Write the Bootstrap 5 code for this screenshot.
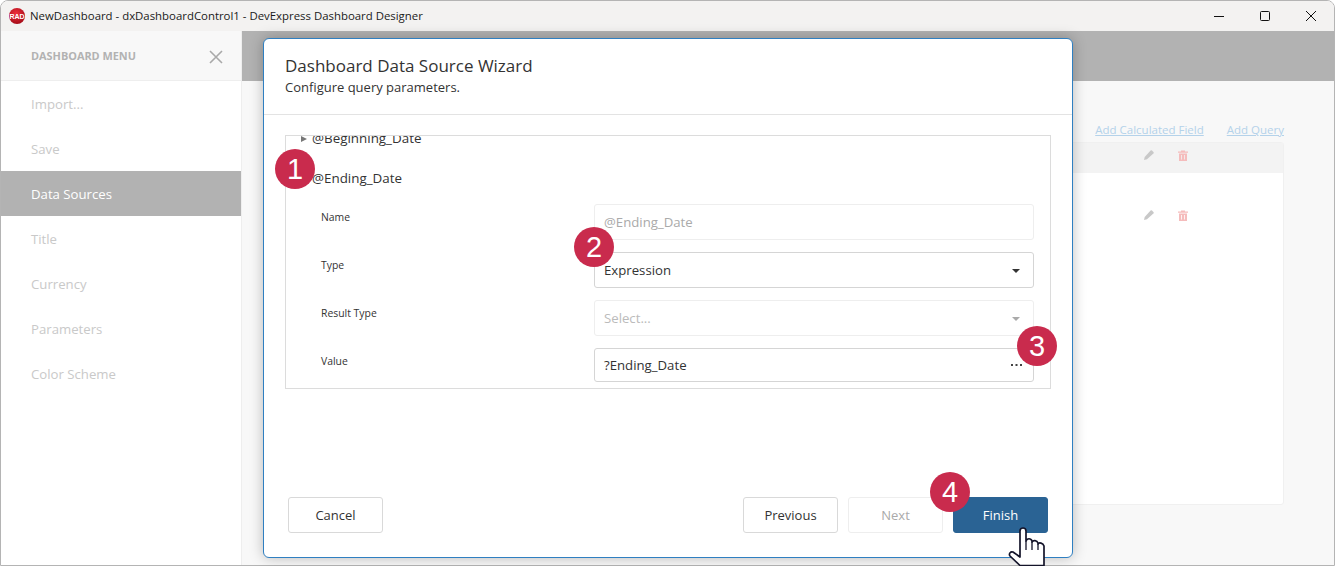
<!DOCTYPE html>
<html lang="en">
<head>
    <meta charset="UTF-8">
    <meta name="viewport" content="width=device-width, initial-scale=1.0">
    <link href="https://cdn.jsdelivr.net/npm/bootstrap@5.3.3/dist/css/bootstrap.min.css" rel="stylesheet">
    <title>DevExpress Dashboard Designer</title>
    <style>
        html, body {
            height: 566px;
            overflow: hidden;
            background-color: #fff;
        }
        body {
            font-family: "Open Sans", "Noto Sans", sans-serif;
            font-size: 13px;
            color: #333;
        }
        .app-window {
            position: relative;
            height: 566px;
            border: 1px solid #b4b4b4;
            border-radius: 8px 8px 0 0;
            overflow: hidden;
        }
        .title-bar {
            height: 30px;
            flex: none;
            background-color: #f3f2f1;
            padding-left: 8px;
            color: #1a1a1a;
            font-size: 11.4px;
        }
        .app-logo {
            width: 16px;
            height: 16px;
            margin-right: 5px;
        }
        .win-btn {
            width: 46px;
            height: 30px;
        }
        .side-panel {
            width: 240px;
            flex: none;
            background-color: #fff;
        }
        .side-head {
            height: 50px;
            background-color: #f8f8f8;
            border-bottom: 1px solid #eee;
            padding: 2px 17px 0 30px;
            color: #b2b2b2;
            font-size: 10.9px;
            font-weight: 700;
        }
        .side-link {
            height: 45px;
            padding: 2px 0 0 30px;
            color: #c9c9c9;
            font-size: 13.2px;
        }
        .side-link.picked {
            background-color: #b2b2b2;
            color: #fff;
        }
        .work-area {
            background-color: #f8f8f8;
            border-left: 1px solid #eee;
        }
        .work-top {
            height: 50px;
            background-color: #b2b2b2;
        }
        .work-links {
            padding: 40px 50px 0 0;
            gap: 23px;
            font-size: 11.5px;
            height: 61px;
        }
        .work-links a {
            color: #b4d2ea;
        }
        .work-card {
            height: 363px;
            margin: 0 50px 0 60px;
            background-color: #fff;
            border: 1px solid #f0f0f0;
            border-radius: 3px;
        }
        .work-row {
            height: 30px;
            gap: 24px;
            padding: 7px 95px 0 0;
        }
        .work-row.shaded {
            background-color: #f3f3f3;
            margin-bottom: 30px;
        }
        .wizard {
            position: absolute;
            left: 263px;
            top: 38px;
            width: 810px;
            height: 520px;
            background-color: #fff;
            border: 1px solid #2f7fc1;
            border-radius: 6px;
            box-shadow: 0 0 14px rgba(0, 0, 0, .25);
        }
        .wizard-head {
            height: 76px;
            padding: 14px 21px 0;
            border-bottom: 1px solid #e3e3e3;
            color: #333;
        }
        .wizard-title {
            font-size: 17px;
            line-height: 25px;
        }
        .wizard-sub {
            font-size: 13px;
            line-height: 18px;
        }
        .param-box {
            margin: 20px 21px 0;
            height: 254px;
            border: 1px solid #dcdcdc;
            overflow: hidden;
        }
        .param-line {
            font-size: 13.4px;
            line-height: 18px;
        }
        .param-line.cut {
            margin-top: -7px;
            padding-left: 15px;
            height: 18px;
        }
        .param-line.open {
            margin-top: 22px;
            padding-left: 26px;
            height: 35px;
        }
        .caret-right {
            display: inline-block;
            border-left: 6px solid #777;
            border-top: 3.5px solid transparent;
            border-bottom: 3.5px solid transparent;
            margin-right: 5px;
            vertical-align: 1px;
        }
        .param-row {
            height: 48px;
            padding-left: 35px;
            padding-right: 16px;
        }
        .param-name {
            width: 273px;
            flex: none;
            font-size: 10.4px;
            padding-top: 6px;
        }
        .param-field {
            height: 36px;
            flex: 1;
            padding: 2px 9px 0;
            border: 1px solid #d5d5d5;
            border-radius: 3px;
            font-size: 13.2px;
            color: #333;
        }
        .param-field.off {
            border-color: #eee;
            color: #bbb;
        }
        .param-field.locked {
            color: #aaa;
        }
        .param-row.last .param-field {
            height: 34px;
        }
        .caret-down {
            margin-right: 4px;
            border-top: 4px solid #333;
            border-left: 4px solid transparent;
            border-right: 4px solid transparent;
        }
        .off .caret-down {
            border-top-color: #aaa;
        }
        .more-dots {
            margin: -2px 2px 0 0;
        }
        .wizard-foot {
            position: absolute;
            left: 24px;
            right: 24px;
            bottom: 24px;
            gap: 10px;
        }
        .wiz-btn {
            width: 95px;
            height: 36px;
            padding: 2px 0 0;
            font-size: 13px;
            border-radius: 3px;
            border: 1px solid #d9d9d9;
            color: #333;
            background-color: #fff;
        }
        .wiz-btn:disabled {
            border-color: #eee;
            color: #aaa;
            opacity: 1;
        }
        .wiz-btn.go {
            background-color: #2a6394;
            border-color: #2a6394;
            color: #fff;
        }
        .step-dot {
            position: absolute;
            width: 40px;
            height: 40px;
            border-radius: 50%;
            background-color: #c92b4d;
            color: #fff;
            font-family: "Liberation Sans", sans-serif;
            font-size: 29px;
            line-height: 40px;
            text-align: center;
        }
        .dot-1 { left: 275px; top: 149px; }
        .dot-2 { left: 574px; top: 227px; }
        .dot-3 { left: 1017px; top: 326px; }
        .dot-4 { left: 930px; top: 472px; }
        .hand-cursor {
            position: absolute;
            left: 1005px;
            top: 525px;
            width: 45px;
            height: 41px;
        }
    </style>
</head>
<body>
    <div class="app-window d-flex flex-column">
        <div class="title-bar d-flex align-items-center">
            <svg class="app-logo" viewBox="0 0 16 16">
                <defs>
                    <radialGradient id="logoRed" cx="45%" cy="35%" r="70%">
                        <stop offset="0" stop-color="#f0303c"/>
                        <stop offset="1" stop-color="#a00a16"/>
                    </radialGradient>
                </defs>
                <circle cx="8" cy="8" r="8" fill="url(#logoRed)"/>
                <text x="8" y="10.500" font-size="7" font-weight="700" text-anchor="middle" fill="#fff" font-family="Liberation Sans">RAD</text>
            </svg>
            <span>NewDashboard - dxDashboardControl1 - DevExpress Dashboard Designer</span>
            <div class="ms-auto d-flex">
                <div class="win-btn d-flex align-items-center justify-content-center">
                    <svg width="12" height="12" viewBox="0 0 12 12"><path d="M1 6.500h10" stroke="#111" fill="none"/></svg>
                </div>
                <div class="win-btn d-flex align-items-center justify-content-center">
                    <svg width="12" height="12" viewBox="0 0 12 12"><rect x="1.500" y="1.500" width="9" height="9" rx="1" stroke="#111" fill="none"/></svg>
                </div>
                <div class="win-btn d-flex align-items-center justify-content-center">
                    <svg width="12" height="12" viewBox="0 0 12 12"><path d="M1 1l10 10M11 1L1 11" stroke="#111" fill="none"/></svg>
                </div>
            </div>
        </div>
        <div class="d-flex flex-grow-1">
            <div class="side-panel">
                <div class="side-head d-flex align-items-center justify-content-between">
                    <span>DASHBOARD MENU</span>
                    <svg width="16" height="16" viewBox="0 0 16 16"><path d="M2 2l12 12M14 2L2 14" stroke="#a9a9a9" stroke-width="1.600" fill="none"/></svg>
                </div>
                <div class="side-link d-flex align-items-center">Import...</div>
                <div class="side-link d-flex align-items-center">Save</div>
                <div class="side-link picked d-flex align-items-center">Data Sources</div>
                <div class="side-link d-flex align-items-center">Title</div>
                <div class="side-link d-flex align-items-center">Currency</div>
                <div class="side-link d-flex align-items-center">Parameters</div>
                <div class="side-link d-flex align-items-center">Color Scheme</div>
            </div>
            <div class="work-area flex-grow-1">
                <div class="work-top"></div>
                <div class="work-links d-flex justify-content-end">
                    <a href="#">Add Calculated Field</a>
                    <a href="#">Add Query</a>
                </div>
                <div class="work-card">
                    <div class="work-row shaded d-flex align-items-start justify-content-end">
                        <svg width="10" height="10" viewBox="0 0 10 10"><path d="M0 10l.7-3L6.600.6a1 1 0 0 1 1.400 0l1.400 1.400a1 1 0 0 1 0 1.400L3 9.300z" fill="#c8c8c8"/></svg>
                        <svg width="10" height="11" viewBox="0 0 10 11"><path d="M0 1.500h3V.5h4v1h3v1.300H0zM1 3.500h8V11H1zM3.200 5v4.500h.8V5zM6 5v4.500h.8V5z" fill="#f5bcbc" fill-rule="evenodd"/></svg>
                    </div>
                    <div class="work-row d-flex align-items-start justify-content-end">
                        <svg width="10" height="10" viewBox="0 0 10 10"><path d="M0 10l.7-3L6.600.6a1 1 0 0 1 1.400 0l1.400 1.400a1 1 0 0 1 0 1.400L3 9.300z" fill="#c8c8c8"/></svg>
                        <svg width="10" height="11" viewBox="0 0 10 11"><path d="M0 1.500h3V.5h4v1h3v1.300H0zM1 3.500h8V11H1zM3.200 5v4.500h.8V5zM6 5v4.500h.8V5z" fill="#f5bcbc" fill-rule="evenodd"/></svg>
                    </div>
                </div>
            </div>
        </div>
    </div>

    <div class="wizard">
        <div class="wizard-head">
            <div class="wizard-title">Dashboard Data Source Wizard</div>
            <div class="wizard-sub">Configure query parameters.</div>
        </div>
        <div class="param-box">
            <div class="param-line cut"><span class="caret-right"></span>@Beginning_Date</div>
            <div class="param-line open">@Ending_Date</div>
            <div class="param-row d-flex">
                <div class="param-name">Name</div>
                <div class="param-field off locked d-flex align-items-center">@Ending_Date</div>
            </div>
            <div class="param-row d-flex">
                <div class="param-name">Type</div>
                <div class="param-field d-flex align-items-center justify-content-between">Expression<span class="caret-down"></span></div>
            </div>
            <div class="param-row d-flex">
                <div class="param-name">Result Type</div>
                <div class="param-field off d-flex align-items-center justify-content-between">Select...<span class="caret-down"></span></div>
            </div>
            <div class="param-row last d-flex">
                <div class="param-name">Value</div>
                <div class="param-field d-flex align-items-center justify-content-between">?Ending_Date
                    <svg class="more-dots" width="11" height="2" viewBox="0 0 11 2"><path d="M0 0h2v2H0zM4.500 0h2v2h-2zM9 0h2v2H9z" fill="#444"/></svg>
                </div>
            </div>
        </div>
        <div class="wizard-foot d-flex">
            <button type="button" class="btn wiz-btn me-auto">Cancel</button>
            <button type="button" class="btn wiz-btn">Previous</button>
            <button type="button" class="btn wiz-btn" disabled>Next</button>
            <button type="button" class="btn wiz-btn go">Finish</button>
        </div>
    </div>

    <div class="step-dot dot-1">1</div>
    <div class="step-dot dot-2">2</div>
    <div class="step-dot dot-3">3</div>
    <div class="step-dot dot-4">4</div>

    <svg class="hand-cursor" viewBox="0 0 45 41">
        <path d="M15 6c0-4 6-4 6 0v10c1-3 5-3 6 0v1c1-2 5-2 6 1v1c1-2 5-1 6 2v19.500H15L5 31c-1.500-2 .500-5 3-4l7 5z" fill="#fff" stroke="#14142a" stroke-width="1.700" stroke-linejoin="round"/>
        <path d="M21 16v9M27 17v8M33 19v6" fill="none" stroke="#14142a" stroke-width="1.300"/>
    </svg>
</body>
</html>
